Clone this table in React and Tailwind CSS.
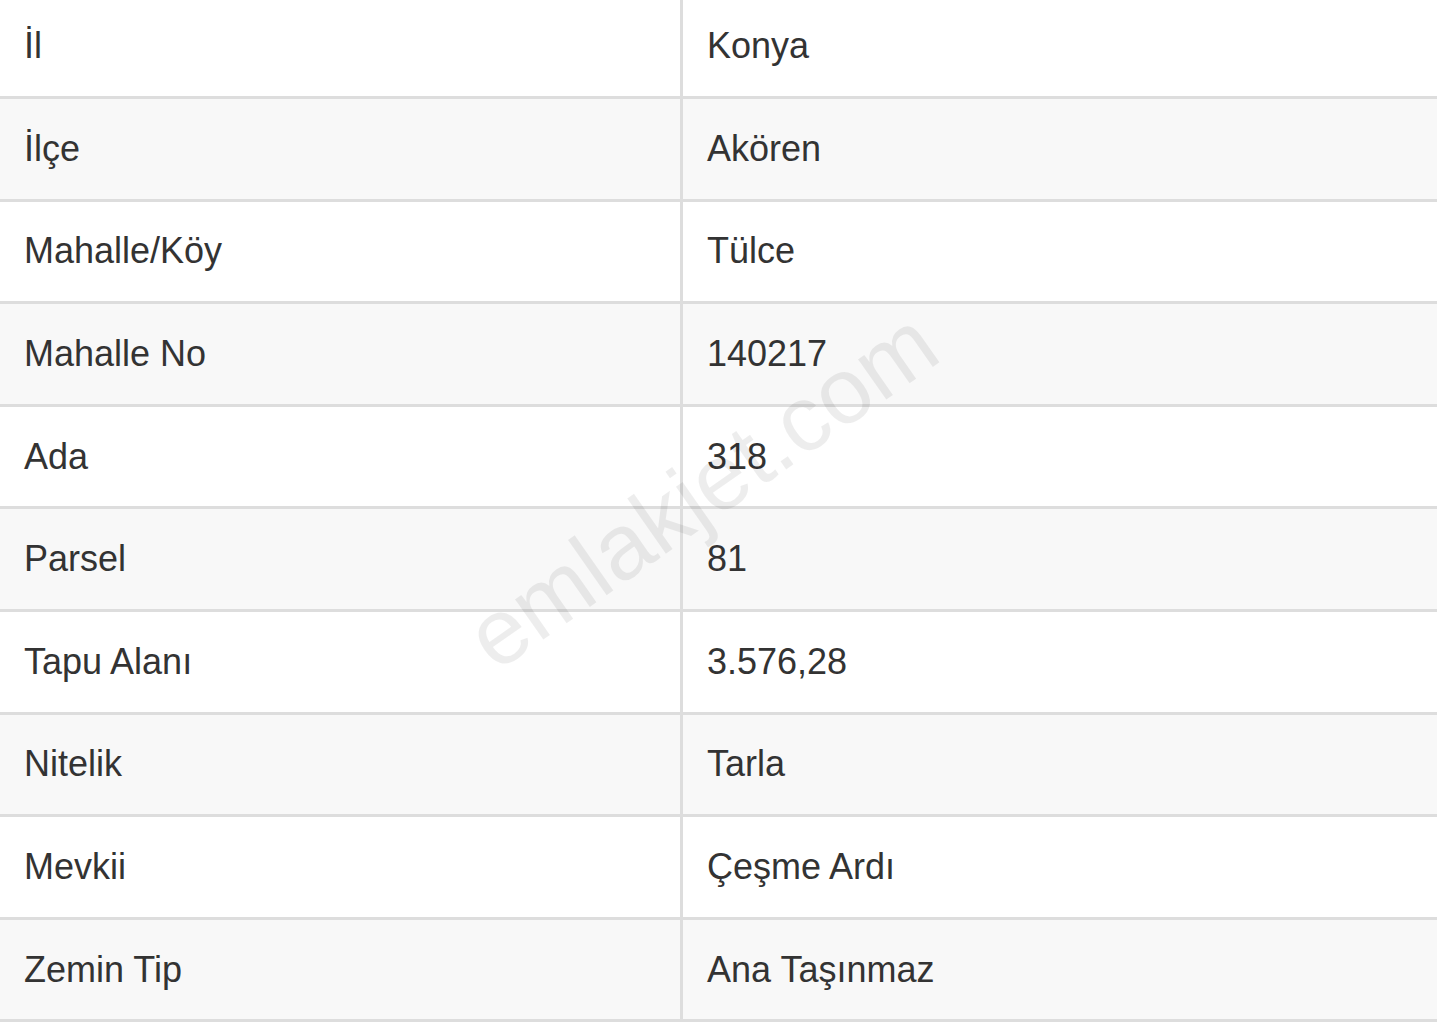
import React from "react";

const rows = [
  ["İl", "Konya"],
  ["İlçe", "Akören"],
  ["Mahalle/Köy", "Tülce"],
  ["Mahalle No", "140217"],
  ["Ada", "318"],
  ["Parsel", "81"],
  ["Tapu Alanı", "3.576,28"],
  ["Nitelik", "Tarla"],
  ["Mevkii", "Çeşme Ardı"],
  ["Zemin Tip", "Ana Taşınmaz"],
];

export default function App() {
  return (
    <div className="relative h-[1029px] w-full overflow-hidden bg-white font-['Liberation_Sans',Arial,sans-serif] text-[#333333]">
      {rows.map(([label, value], i) => (
        <div
          key={label}
          className={`flex border-b-[3px] border-[#dddddd] ${i === 0 ? "-mt-[4px] h-[103px]" : "h-[102.6px]"} ${i % 2 === 1 ? "bg-[#f8f8f8]" : "bg-white"}`}
        >
          <div className="flex w-[683px] shrink-0 items-center border-r-[3px] border-[#dddddd] pl-[24px] text-[36px]">
            {label}
          </div>
          <div className="flex flex-1 items-center pl-[24px] text-[36px]">{value}</div>
        </div>
      ))}
      <div className="pointer-events-none absolute left-[702px] top-[490px] -translate-x-1/2 -translate-y-1/2 -rotate-[35deg] whitespace-nowrap text-[93px] leading-none text-black/[0.07]">
        emlakjet.com
      </div>
    </div>
  );
}
